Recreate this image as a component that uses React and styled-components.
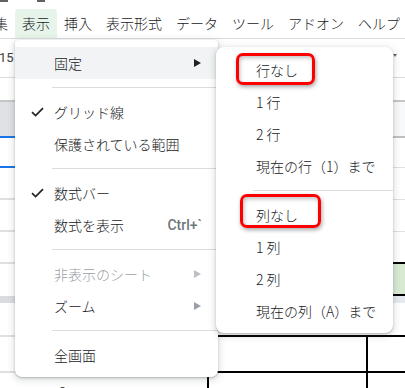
import React from 'react';
import styled, { createGlobalStyle } from 'styled-components';

const Global = createGlobalStyle`
  html, body { margin: 0; padding: 0; background: #fff; }
  body { font-family: "Noto Sans CJK JP", "Noto Sans", sans-serif; }
`;

const Page = styled.div`
  position: relative;
  width: 405px;
  height: 388px;
  overflow: hidden;
  background: #fff;
  font-family: "Noto Sans CJK JP", "Noto Sans", sans-serif;
  font-weight: 300;
  color: #202124;
`;

const TopStrip = styled.div`
  height: 2px;
  display: flex;
  gap: 29px;
`;

const IconEdge = styled.div`
  width: 8px;
  height: 2px;
  background: #5f6368;
`;

const MenuBar = styled.div`
  height: 36px;
  display: flex;
  align-items: flex-end;
  margin-left: -13px;
  border-bottom: 1px solid #dadce0;
`;

const BarItem = styled.div`
  height: 29px;
  line-height: 29px;
  padding: 0 7px;
  font-size: 14px;
  white-space: nowrap;
  color: #202124;
  border-radius: 4px 4px 0 0;
  background: ${p => (p.$active ? '#e6f4ea' : 'transparent')};
`;

const Sheet = styled.div`
  display: flex;
  flex-direction: column;
`;

const ToolRow = styled.div`
  height: 38px;
  display: flex;
  align-items: center;
  justify-content: space-between;
  border-bottom: 1px solid #dadce0;
  font-family: "Roboto", "Liberation Sans", sans-serif;
  font-weight: 400;
  font-size: 13px;
  color: #3c4043;
`;

const FontSize = styled.span`
  margin-left: -1px;
  margin-top: -2px;
`;

const Caret = styled.span`
  margin-right: 8px;
  margin-top: -6px;
  width: 0;
  height: 0;
  border-left: 2px solid transparent;
  border-right: 2px solid transparent;
  border-top: 3px solid #5f6368;
`;

const FormulaRow = styled.div`
  height: 22px;
  border-bottom: 2px solid #c4c7c5;
`;

const GridRow = styled.div`
  display: grid;
  grid-template-columns: 57px 152px 159px 1fr;
  height: ${p => p.$h}px;
`;

const HeadCell = styled.div`
  background: ${p => p.$bg || '#fff'};
  border-bottom: ${p => p.$line || 'none'};
  box-sizing: border-box;
`;

const DataCell = styled.div`
  background: ${p => p.$bg || '#fff'};
  border-bottom: ${p => p.$line || 'none'};
  border-right: ${p => (p.$vline ? '2px solid #000' : 'none')};
  box-sizing: border-box;
  font-size: 14px;
  line-height: 20px;
  padding: 9px 0 0 2px;
  white-space: nowrap;
`;

const rows = [
  { h: 36, head: '#dfe1e5', data: '#f8f9fa', hl: '2px solid #1a73e8', dl: '2px solid #c0c0c0' },
  { h: 30, hl: '2px solid #1a73e8', dl: '1px solid #e2e2e2' },
  { h: 32, hl: '2px solid #e0e0e0', dl: '1px solid #e2e2e2' },
  { h: 32, hl: '2px solid #e0e0e0', dl: '1px solid #e2e2e2' },
  { h: 32, hl: '2px solid #e0e0e0', dl: '2px solid #000' },
  { h: 32, data: '#d9ead3', dl: '2px solid #000' },
  { h: 7, head: '#dadce0', data: '#e6e9ef' },
  { h: 34, hl: '2px solid #e0e0e0', dl: '2px solid #000' },
  { h: 36, hl: '2px solid #e0e0e0', dl: '2px solid #000', v: true },
  { h: 20, v: true, text: '2口' },
];

const Menu = styled.div`
  position: absolute;
  left: ${p => p.$x}px;
  top: ${p => p.$y}px;
  width: ${p => p.$w}px;
  padding: 7px 0 6px;
  background: #fff;
  border-radius: ${p => p.$radius};
  box-shadow: 0 2px 6px 2px rgba(60, 64, 67, 0.15), 0 1px 2px rgba(60, 64, 67, 0.3);
  box-sizing: border-box;
`;

const MenuRow = styled.div`
  height: 32px;
  display: flex;
  align-items: center;
  padding: 0 17px 0 ${p => p.$indent}px;
  font-size: 14px;
  white-space: nowrap;
  color: ${p => (p.$disabled ? '#9aa0a6' : '#202124')};
  background: ${p => (p.$active ? '#f1f3f4' : 'transparent')};
`;

const CheckSlot = styled.span`
  width: 24px;
  height: 12px;
  display: flex;
  align-items: center;
`;

const Label = styled.span`
  flex: 1;
`;

const Shortcut = styled.span`
  font-family: "Roboto", "Liberation Sans", sans-serif;
  font-weight: 500;
  font-size: 14px;
  color: #70757a;
  margin-right: -1px;
`;

const Arrow = styled.span`
  width: 0;
  height: 0;
  border-top: 4px solid transparent;
  border-bottom: 4px solid transparent;
  border-left: 7px solid ${p => p.$color};
`;

const Separator = styled.div`
  height: 1px;
  background: #dadce0;
  margin: 8px 0 8px 37px;
`;

const Callout = styled.div`
  position: absolute;
  left: ${p => p.$x}px;
  top: ${p => p.$y}px;
  width: ${p => p.$w}px;
  height: ${p => p.$h}px;
  border: 3px solid #ff0000;
  border-radius: 7px;
  box-sizing: border-box;
  box-shadow: 1px 2px 4px rgba(0, 0, 0, 0.35), inset 1px 2px 4px rgba(0, 0, 0, 0.25);
`;

const Check = () => (
  <svg width="13" height="10" viewBox="0 0 13 10" style={{ marginLeft: 1 }}>
    <path d="M1 5.2 L4.6 8.6 L12 1.2" fill="none" stroke="#202124" strokeWidth="1.7" />
  </svg>
);

const barItems = ['集', '表示', '挿入', '表示形式', 'データ', 'ツール', 'アドオン', 'ヘルプ'];

export default function App() {
  return (
    <Page>
      <Global />
      <TopStrip>
        <IconEdge />
        <IconEdge />
      </TopStrip>
      <MenuBar>
        {barItems.map(t => (
          <BarItem key={t} $active={t === '表示'}>{t}</BarItem>
        ))}
      </MenuBar>
      <Sheet>
        <ToolRow>
          <FontSize>15</FontSize>
          <Caret />
        </ToolRow>
        <FormulaRow />
        {rows.map((r, i) => (
          <GridRow key={i} $h={r.h}>
            <HeadCell $bg={r.head} $line={r.hl} />
            <DataCell $bg={r.data} $line={r.dl} $vline={r.v}>{r.text}</DataCell>
            <DataCell $bg={r.data} $line={r.dl} $vline={r.v} />
            <DataCell $bg={r.data} $line={r.dl} />
          </GridRow>
        ))}
      </Sheet>

      <Menu $x={15} $y={40} $w={203} $radius="4px 4px 7px 7px">
        <MenuRow $indent={15} $active>
          <CheckSlot />
          <Label>固定</Label>
          <Arrow $color="#202124" />
        </MenuRow>
        <Separator />
        <MenuRow $indent={15}>
          <CheckSlot><Check /></CheckSlot>
          <Label>グリッド線</Label>
        </MenuRow>
        <MenuRow $indent={15}>
          <CheckSlot />
          <Label>保護されている範囲</Label>
        </MenuRow>
        <Separator />
        <MenuRow $indent={15}>
          <CheckSlot><Check /></CheckSlot>
          <Label>数式バー</Label>
        </MenuRow>
        <MenuRow $indent={15}>
          <CheckSlot />
          <Label>数式を表示</Label>
          <Shortcut>Ctrl+`</Shortcut>
        </MenuRow>
        <Separator />
        <MenuRow $indent={15} $disabled>
          <CheckSlot />
          <Label>非表示のシート</Label>
          <Arrow $color="#bdc1c6" />
        </MenuRow>
        <MenuRow $indent={15}>
          <CheckSlot />
          <Label>ズーム</Label>
          <Arrow $color="#9aa0a6" />
        </MenuRow>
        <Separator />
        <MenuRow $indent={15}>
          <CheckSlot />
          <Label>全画面</Label>
        </MenuRow>
      </Menu>

      <Menu $x={216} $y={47} $w={177} $radius="8px">
        <MenuRow $indent={40}><Label>行なし</Label></MenuRow>
        <MenuRow $indent={40}><Label>1 行</Label></MenuRow>
        <MenuRow $indent={40}><Label>2 行</Label></MenuRow>
        <MenuRow $indent={40}><Label>現在の行（1）まで</Label></MenuRow>
        <Separator />
        <MenuRow $indent={40}><Label>列なし</Label></MenuRow>
        <MenuRow $indent={40}><Label>1 列</Label></MenuRow>
        <MenuRow $indent={40}><Label>2 列</Label></MenuRow>
        <MenuRow $indent={40}><Label>現在の列（A）まで</Label></MenuRow>
      </Menu>

      <Callout $x={236} $y={53} $w={79} $h={32} />
      <Callout $x={240} $y={194} $w={81} $h={34} />
    </Page>
  );
}
